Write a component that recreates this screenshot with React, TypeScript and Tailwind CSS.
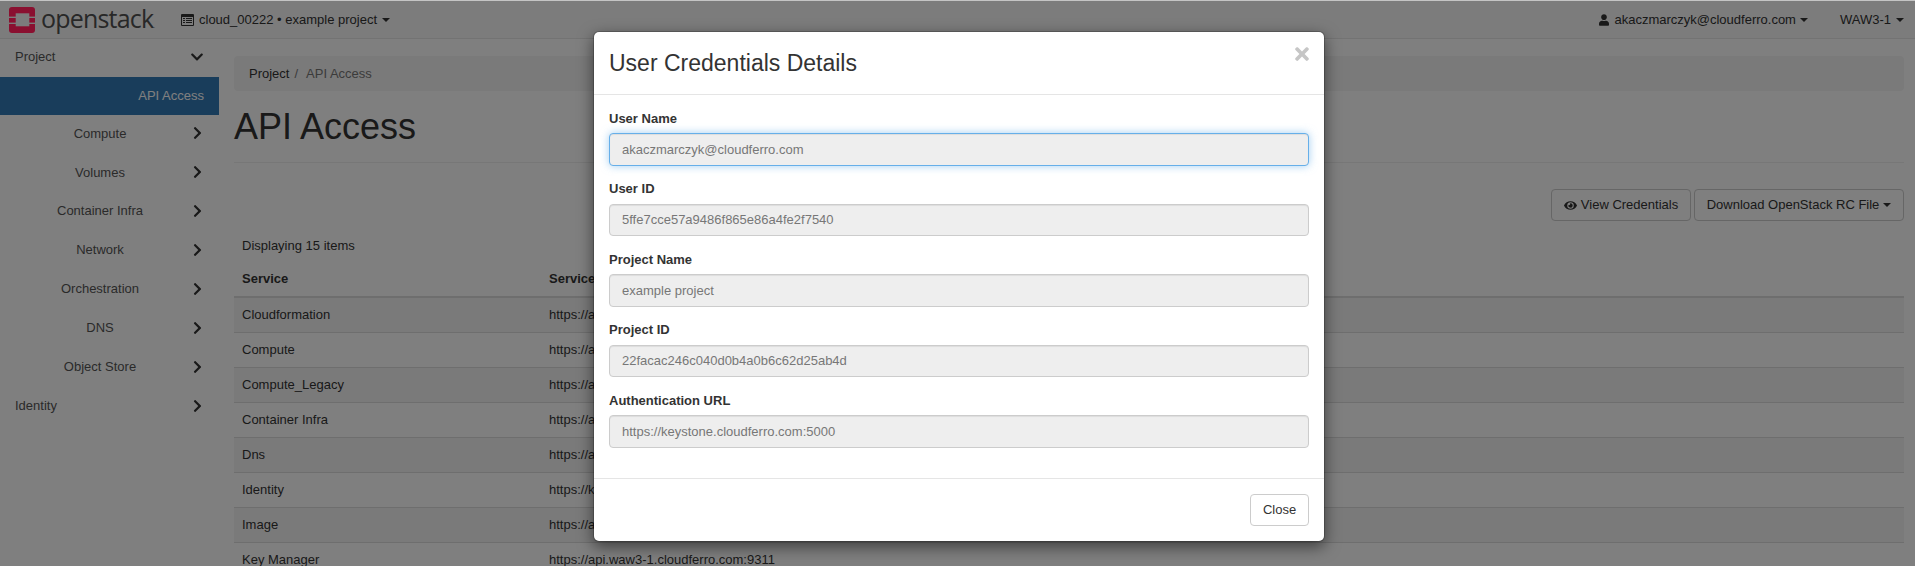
import { FaChevronDown, FaChevronRight, FaEye, FaTimes, FaUser } from "react-icons/fa";

const NAV_ITEMS = ["Compute", "Volumes", "Container Infra", "Network", "Orchestration", "DNS", "Object Store"];

const SERVICES = [
  { name: "Cloudformation", url: "https://api.waw3-1.cloudferro.com:8000/v1" },
  { name: "Compute", url: "https://api.waw3-1.cloudferro.com:8774/v2.1" },
  { name: "Compute_Legacy", url: "https://api.waw3-1.cloudferro.com:8774/v2" },
  { name: "Container Infra", url: "https://api.waw3-1.cloudferro.com:9511/v1" },
  { name: "Dns", url: "https://api.waw3-1.cloudferro.com:9001" },
  { name: "Identity", url: "https://keystone.cloudferro.com:5000" },
  { name: "Image", url: "https://api.waw3-1.cloudferro.com:9292" },
  { name: "Key Manager", url: "https://api.waw3-1.cloudferro.com:9311" },
];

const FIELDS = [
  { label: "User Name", value: "akaczmarczyk@cloudferro.com", focused: true },
  { label: "User ID", value: "5ffe7cce57a9486f865e86a4fe2f7540" },
  { label: "Project Name", value: "example project" },
  { label: "Project ID", value: "22facac246c040d0b4a0b6c62d25ab4d" },
  { label: "Authentication URL", value: "https://keystone.cloudferro.com:5000" },
];

function Caret() {
  return <span className="inline-block w-0 h-0 border-x-[4px] border-x-transparent border-t-[4px] border-t-current" />;
}

// sits above the backdrop, so these are the dimmed colours
function Logo() {
  return (
    <svg width="26" height="26" viewBox="0 0 26 26" className="shrink-0 relative z-10">
      <rect width="26" height="26" rx="3" fill="#8a1030" />
      <rect x="6.700" y="6.300" width="13.600" height="13" fill="#7c7c7c" />
      <rect x="0" y="9.600" width="7" height="1.400" fill="#7c7c7c" />
      <rect x="0" y="15.600" width="7" height="1.400" fill="#7c7c7c" />
      <rect x="19" y="9.600" width="7" height="1.400" fill="#7c7c7c" />
      <rect x="19" y="15.600" width="7" height="1.400" fill="#7c7c7c" />
    </svg>
  );
}

function ListIcon() {
  return (
    <svg width="13" height="12" viewBox="0 0 13 12" className="mr-[5px] shrink-0">
      <path
        fillRule="evenodd"
        fill="currentColor"
        d="M1 0h11a1 1 0 0 1 1 1v10a1 1 0 0 1-1 1H1a1 1 0 0 1-1-1V1a1 1 0 0 1 1-1zM1 3v8h11V3z"
      />
      <path fill="currentColor" d="M2 4h2v1H2zM5 4h6v1H5zM2 6h2v1H2zM5 6h6v1H5zM2 8h2v1H2zM5 8h6v1H5z" />
    </svg>
  );
}

function Navbar() {
  return (
    <div className="h-[38px] mt-px bg-[#f8f8f8] border-b border-[#e7e7e7] flex items-center text-[#333] shrink-0">
      <div className="ml-[9px] w-[172px] flex items-center">
        <Logo />
        <span className="ml-[6px] text-[25px] leading-none tracking-[-0.800px] text-[#505050] font-['Open_Sans',sans-serif] -mt-[3px]">
          openstack<span className="text-[8px] text-[#aaa]">.</span>
        </span>
      </div>
      <div className="flex items-center text-[13px]">
        <ListIcon />
        <span>cloud_00222 • example project</span>
        <span className="ml-[5px] flex"><Caret /></span>
      </div>
      <div className="ml-auto flex items-center text-[13px]">
        <FaUser className="w-[10px] h-[12px] mr-[5px]" />
        <span>akaczmarczyk@cloudferro.com</span>
        <span className="ml-[4px] flex"><Caret /></span>
        <span className="ml-[32px]">WAW3-1</span>
        <span className="ml-[5px] mr-[11px] flex"><Caret /></span>
      </div>
    </div>
  );
}

function Sidebar() {
  return (
    <div className="w-[219px] shrink-0 text-[13px] text-[#555]">
      <div className="h-[38px] pb-[2px] flex items-center justify-between pl-[15px] pr-[15px]">
        <span>Project</span>
        <FaChevronDown className="w-[14px] h-[14px] text-[#333]" />
      </div>
      <div className="h-[38px] bg-[#337ab7] text-white flex items-center justify-end pr-[15px]">API Access</div>
      <div className="-mt-px">
        {NAV_ITEMS.map((item) => (
          <div key={item} className="h-[38.900px] flex items-center">
            <span className="w-[200px] text-center">{item}</span>
            <FaChevronRight className="w-[11px] h-[14px] text-[#333] ml-[-8px]" />
          </div>
        ))}
        <div className="h-[38.900px] flex items-center justify-between pl-[15px] pr-[16px]">
          <span>Identity</span>
          <FaChevronRight className="w-[11px] h-[14px] text-[#333]" />
        </div>
      </div>
    </div>
  );
}

function Main() {
  return (
    <div className="flex-1 min-w-0 pl-[15px] pr-[11px] pt-[17px] text-[13px] text-[#333]">
      <div className="h-[35px] bg-[#f5f5f5] rounded-[4px] flex items-center px-[15px]">
        <span>Project</span>
        <span className="text-[#777] ml-[5px] mr-[5px]">/</span>
        <span className="text-[#777] ml-[3px]">API Access</span>
      </div>
      <h1 className="mt-[16px] text-[36px] leading-[40px] font-normal">API Access</h1>
      <div className="mt-[15px] border-t border-[#eee]" />
      <div className="mt-[26px] flex justify-end gap-[3px]">
        <button className="h-[32px] w-[140px] border border-[#ccc] rounded-[4px] bg-[#fff] flex items-center justify-center">
          <FaEye className="w-[13px] h-[13px] mr-[4px]" />
          View Credentials
        </button>
        <button className="h-[32px] w-[210px] border border-[#ccc] rounded-[4px] bg-[#fff] flex items-center justify-center">
          Download OpenStack RC File
          <span className="ml-[4px] flex"><Caret /></span>
        </button>
      </div>
      <div className="mt-[16px] pl-[8px] leading-[18px]">Displaying 15 items</div>
      <table className="mt-[6px] w-full border-collapse">
        <thead>
          <tr className="border-b-2 border-[#ddd] h-[36px] text-left">
            <th className="pl-[8px] w-[307px] font-bold">Service</th>
            <th className="pl-[8px] font-bold">Service Endpoint</th>
          </tr>
        </thead>
        <tbody>
          {SERVICES.map((s, i) => (
            <tr key={s.name} className={`h-[35px] border-b border-[#ddd] ${i % 2 === 0 ? "bg-[#f5f5f5]" : ""}`}>
              <td className="pl-[8px]">{s.name}</td>
              <td className="pl-[8px]">{s.url}</td>
            </tr>
          ))}
        </tbody>
      </table>
    </div>
  );
}

function CredentialsModal() {
  return (
    <div className="absolute left-[593px] top-[31px] w-[732px] h-[511px] bg-white rounded-[6px] border border-black/20 shadow-[0_5px_15px_rgba(0,0,0,0.5)] text-[13px] text-[#333] bg-clip-padding flex flex-col">
      <div className="h-[63px] border-b border-[#e5e5e5] relative shrink-0 flex items-center pl-[15px]">
        <h4 className="text-[23px] font-normal leading-[26px]">User Credentials Details</h4>
        <FaTimes className="absolute right-[15px] top-[12px] w-[14px] h-[20px] text-[#c6c6c6]" />
      </div>
      <div className="flex-1 px-[15px] pt-[14.500px]">
        {FIELDS.map((f) => (
          <div key={f.label} className="mb-[14.500px]">
            <label className="block font-bold leading-[18px] mb-[5.500px]">{f.label}</label>
            <div
              className={`h-[32.500px] rounded-[4px] bg-[#eee] border flex items-center px-[12px] text-[#777] ${
                f.focused
                  ? "border-[#66afe9] shadow-[inset_0_1px_1px_rgba(0,0,0,0.075),0_0_8px_rgba(102,175,233,0.6)]"
                  : "border-[#ccc] shadow-[inset_0_1px_1px_rgba(0,0,0,0.075)]"
              }`}
            >
              {f.value}
            </div>
          </div>
        ))}
      </div>
      <div className="h-[63px] border-t border-[#e5e5e5] flex items-center justify-end pr-[15px] shrink-0">
        <button className="h-[32px] w-[59px] border border-[#ccc] rounded-[4px] bg-white text-[#333]">Close</button>
      </div>
    </div>
  );
}

export default function App() {
  return (
    <div className="relative w-[1915px] h-[566px] overflow-hidden bg-[#c4c4c4] font-['Liberation_Sans',Arial,sans-serif] flex flex-col">
      <Navbar />
      <div className="flex flex-1 min-h-0 bg-white">
        <Sidebar />
        <Main />
      </div>
      <div className="absolute inset-x-0 top-px bottom-0 bg-black/50" />
      <CredentialsModal />
    </div>
  );
}
